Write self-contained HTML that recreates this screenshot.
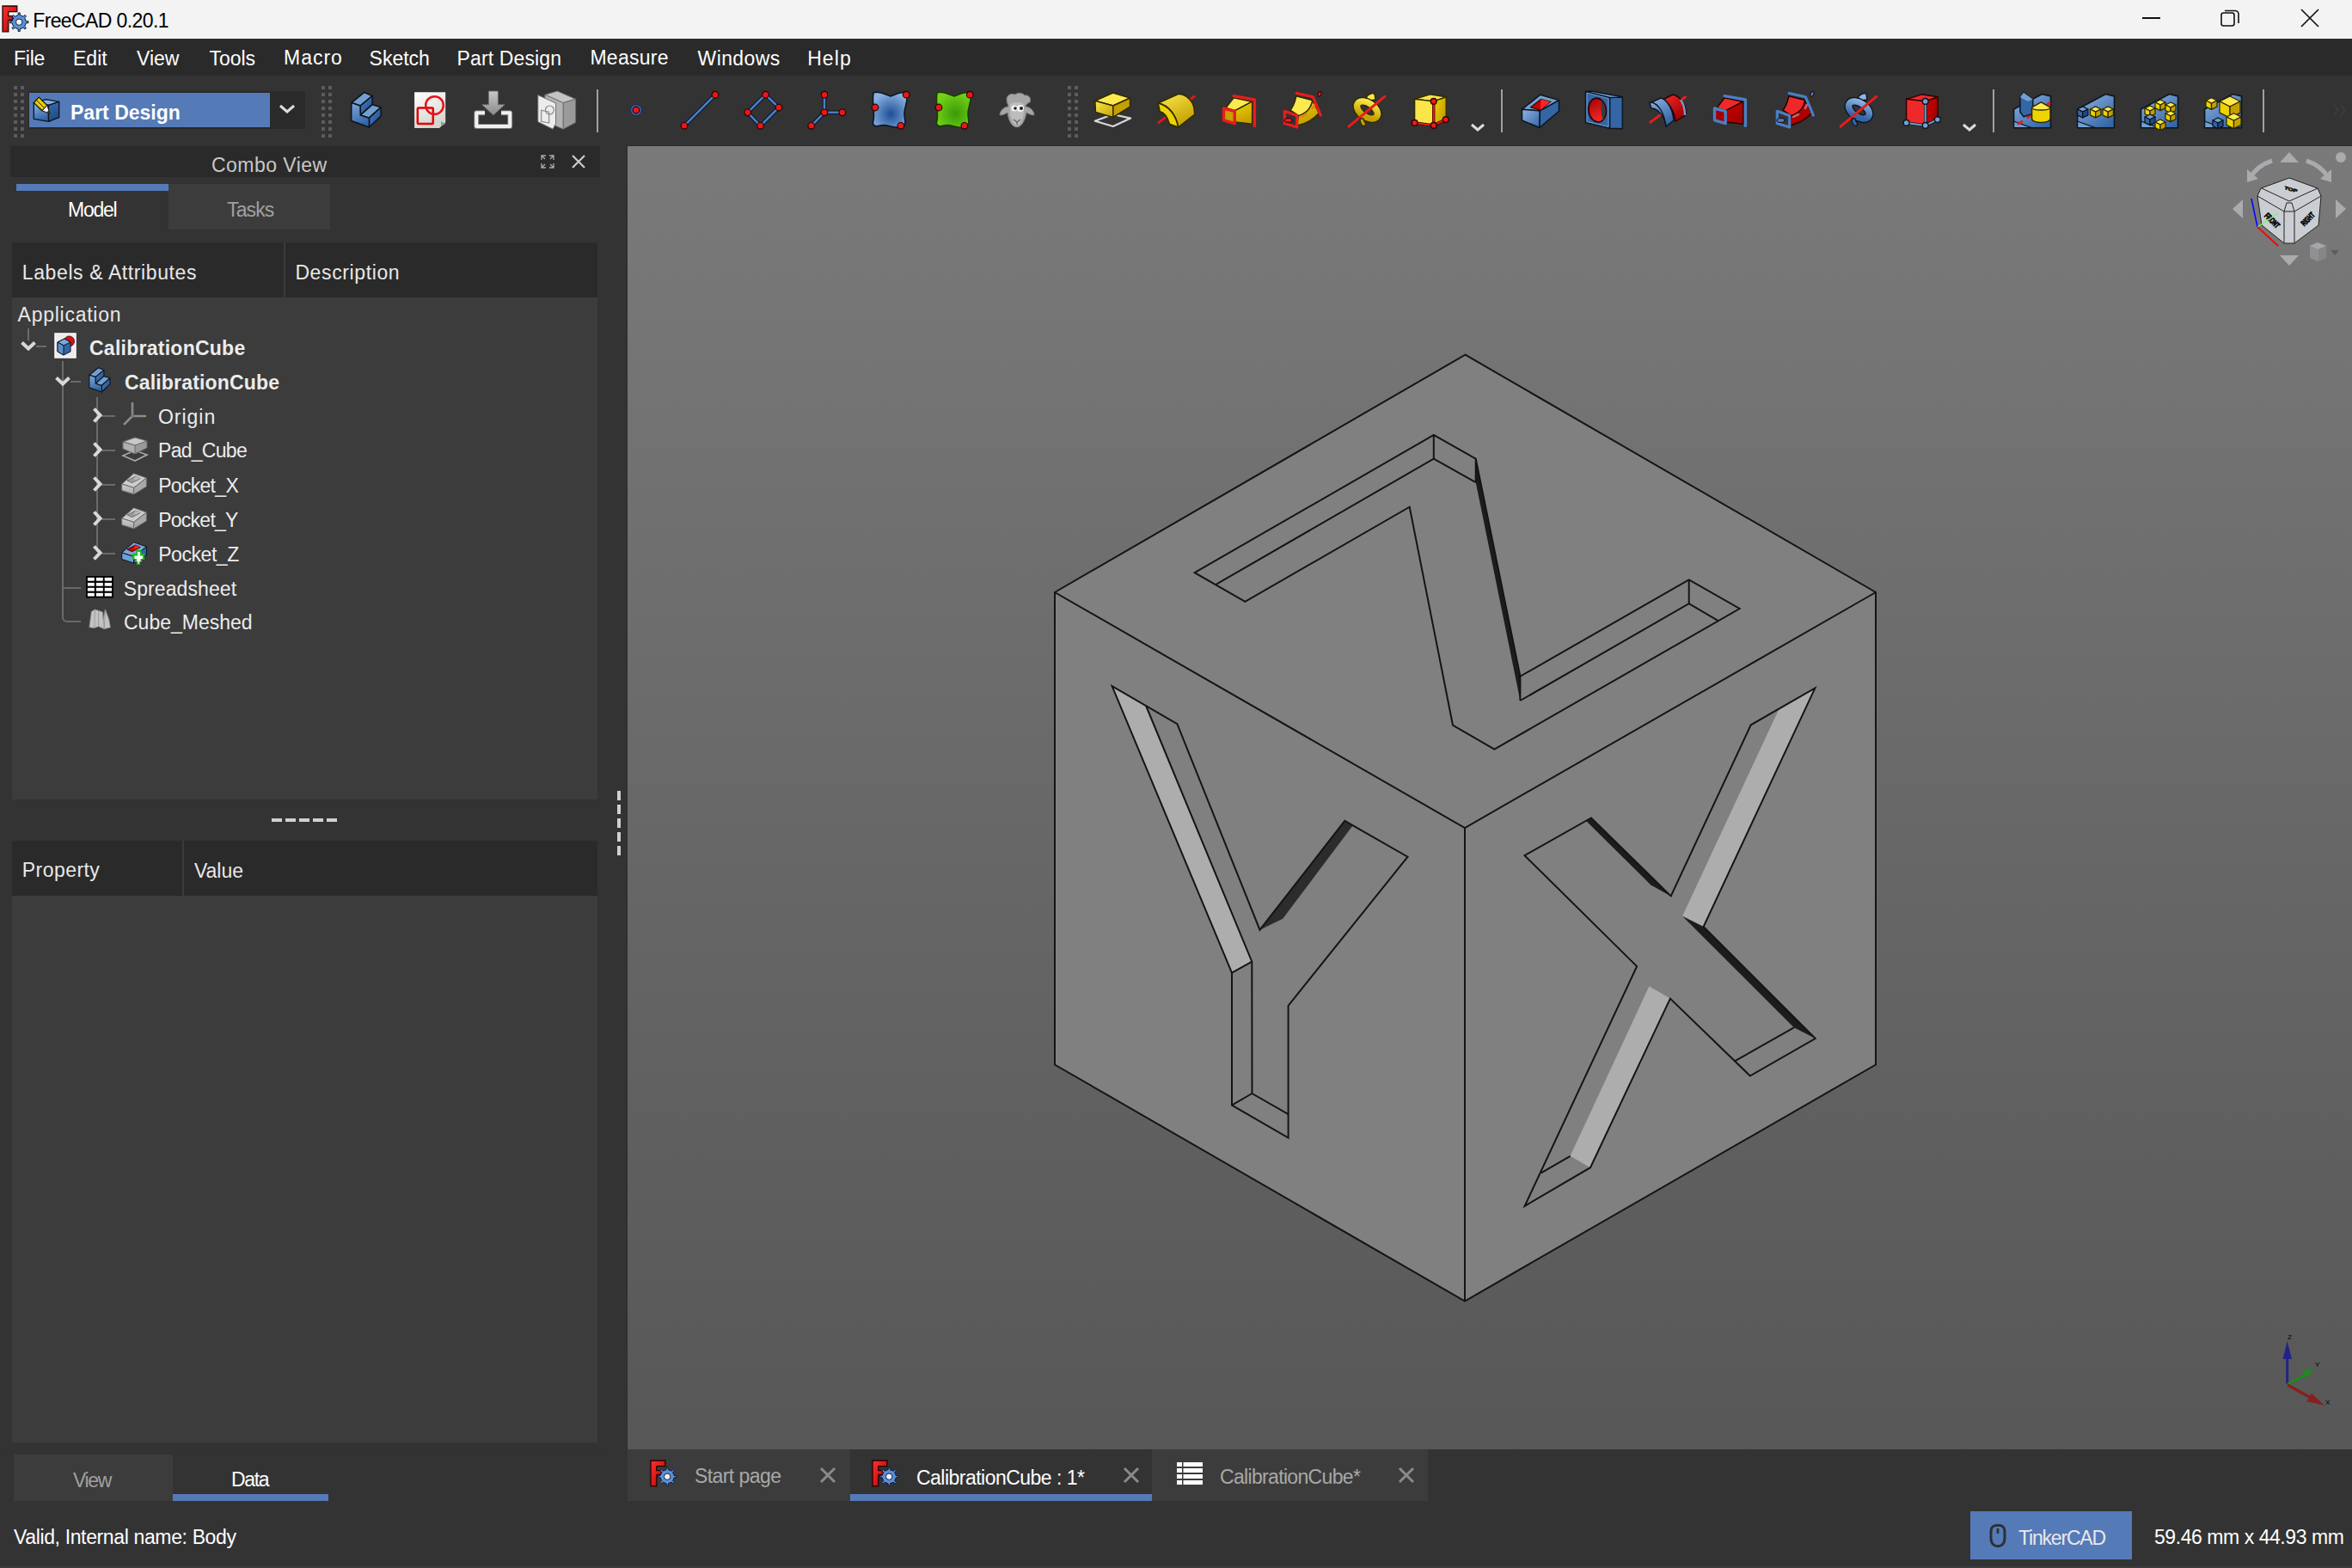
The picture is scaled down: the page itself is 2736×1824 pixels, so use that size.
<!DOCTYPE html>
<html><head><meta charset="utf-8">
<style>
*{margin:0;padding:0;box-sizing:border-box}
html,body{width:2736px;height:1824px;overflow:hidden;background:#333333;font-family:"Liberation Sans",sans-serif}
.a{position:absolute}
.t{position:absolute;white-space:nowrap;line-height:1}
svg.a{overflow:visible}
</style></head><body>
<div class="a" style="left:0px;top:0px;width:2736px;height:45px;background:#f3f3f3;"></div>
<svg class="a" style="left:2px;top:6px" width="34" height="34" viewBox="0 0 34 34"><defs><linearGradient id="lgF" x1="0" y1="0" x2="1" y2="1"><stop offset="0" stop-color="#ff3030"/><stop offset="1" stop-color="#b00000"/></linearGradient></defs>
<path d="M1 1 H17.8 V7.6 H7.8 V12.7 H13 V17.4 H7.8 V30.8 H1 Z" fill="url(#lgF)" stroke="#2a0000" stroke-width="1.3"/>
<path d="M28.33 18.61 L30.95 18.68 L30.95 20.72 L28.33 20.79 L26.72 24.67 L28.52 26.58 L27.08 28.02 L25.17 26.22 L21.29 27.83 L21.22 30.45 L19.18 30.45 L19.11 27.83 L15.23 26.22 L13.32 28.02 L11.88 26.58 L13.68 24.67 L12.07 20.79 L9.45 20.72 L9.45 18.68 L12.07 18.61 L13.68 14.73 L11.88 12.82 L13.32 11.38 L15.23 13.18 L19.11 11.57 L19.18 8.95 L21.22 8.95 L21.29 11.57 L25.17 13.18 L27.08 11.38 L28.52 12.82 L26.72 14.73Z" fill="#5b8fd6" stroke="#0b1a3a" stroke-width="1"/><circle cx="20.2" cy="19.7" r="3.7" fill="#f4f4f4" stroke="#0b1a3a" stroke-width="1"/></svg>
<div class="t" style="left:38.20px;top:13.20px;font-size:23px;color:#000;letter-spacing:-0.608px;">FreeCAD 0.20.1</div>
<div class="a" style="left:2492px;top:20px;width:21px;height:2px;background:#111;"></div>
<svg class="a" style="left:2580px;top:8px" width="30" height="30" viewBox="0 0 30 30"><rect x="4" y="7" width="15" height="15" rx="2.5" fill="none" stroke="#111" stroke-width="1.6"/><path d="M8 4.5 H20 A4 4 0 0 1 24 8.5 V19" fill="none" stroke="#111" stroke-width="1.6"/></svg>
<svg class="a" style="left:2672px;top:6px" width="30" height="30" viewBox="0 0 30 30"><path d="M5 5 L25 25 M25 5 L5 25" stroke="#111" stroke-width="1.7"/></svg>
<div class="a" style="left:0px;top:45px;width:2736px;height:43px;background:#2a2a2a;"></div>
<div class="t" style="left:16.00px;top:57.00px;font-size:23px;color:#fff;letter-spacing:-0.267px;">File</div>
<div class="t" style="left:85.00px;top:57.00px;font-size:23px;color:#fff;letter-spacing:0.000px;">Edit</div>
<div class="t" style="left:159.00px;top:57.00px;font-size:23px;color:#fff;letter-spacing:0.000px;">View</div>
<div class="t" style="left:243.60px;top:57.00px;font-size:23px;color:#fff;letter-spacing:-0.100px;">Tools</div>
<div class="t" style="left:330.00px;top:56.00px;font-size:23px;color:#fff;letter-spacing:1.000px;">Macro</div>
<div class="t" style="left:429.60px;top:57.00px;font-size:23px;color:#fff;letter-spacing:0.000px;">Sketch</div>
<div class="t" style="left:531.60px;top:57.00px;font-size:23px;color:#fff;letter-spacing:0.130px;">Part Design</div>
<div class="t" style="left:686.40px;top:56.00px;font-size:23px;color:#fff;letter-spacing:0.267px;">Measure</div>
<div class="t" style="left:811.60px;top:57.00px;font-size:23px;color:#fff;letter-spacing:0.383px;">Windows</div>
<div class="t" style="left:939.20px;top:57.00px;font-size:23px;color:#fff;letter-spacing:1.067px;">Help</div>
<div class="a" style="left:0px;top:88px;width:2736px;height:82px;background:#333333;"></div>
<svg class="a" style="left:16px;top:100px" width="14" height="62"><rect x="0" y="0" width="4" height="4" fill="#5c5c5c"/><rect x="8" y="0" width="4" height="4" fill="#5c5c5c"/><rect x="0" y="8" width="4" height="4" fill="#5c5c5c"/><rect x="8" y="8" width="4" height="4" fill="#5c5c5c"/><rect x="0" y="16" width="4" height="4" fill="#5c5c5c"/><rect x="8" y="16" width="4" height="4" fill="#5c5c5c"/><rect x="0" y="24" width="4" height="4" fill="#5c5c5c"/><rect x="8" y="24" width="4" height="4" fill="#5c5c5c"/><rect x="0" y="32" width="4" height="4" fill="#5c5c5c"/><rect x="8" y="32" width="4" height="4" fill="#5c5c5c"/><rect x="0" y="40" width="4" height="4" fill="#5c5c5c"/><rect x="8" y="40" width="4" height="4" fill="#5c5c5c"/><rect x="0" y="48" width="4" height="4" fill="#5c5c5c"/><rect x="8" y="48" width="4" height="4" fill="#5c5c5c"/><rect x="0" y="56" width="4" height="4" fill="#5c5c5c"/><rect x="8" y="56" width="4" height="4" fill="#5c5c5c"/></svg>
<svg class="a" style="left:374px;top:100px" width="14" height="62"><rect x="0" y="0" width="4" height="4" fill="#5c5c5c"/><rect x="8" y="0" width="4" height="4" fill="#5c5c5c"/><rect x="0" y="8" width="4" height="4" fill="#5c5c5c"/><rect x="8" y="8" width="4" height="4" fill="#5c5c5c"/><rect x="0" y="16" width="4" height="4" fill="#5c5c5c"/><rect x="8" y="16" width="4" height="4" fill="#5c5c5c"/><rect x="0" y="24" width="4" height="4" fill="#5c5c5c"/><rect x="8" y="24" width="4" height="4" fill="#5c5c5c"/><rect x="0" y="32" width="4" height="4" fill="#5c5c5c"/><rect x="8" y="32" width="4" height="4" fill="#5c5c5c"/><rect x="0" y="40" width="4" height="4" fill="#5c5c5c"/><rect x="8" y="40" width="4" height="4" fill="#5c5c5c"/><rect x="0" y="48" width="4" height="4" fill="#5c5c5c"/><rect x="8" y="48" width="4" height="4" fill="#5c5c5c"/><rect x="0" y="56" width="4" height="4" fill="#5c5c5c"/><rect x="8" y="56" width="4" height="4" fill="#5c5c5c"/></svg>
<svg class="a" style="left:1242px;top:100px" width="14" height="62"><rect x="0" y="0" width="4" height="4" fill="#5c5c5c"/><rect x="8" y="0" width="4" height="4" fill="#5c5c5c"/><rect x="0" y="8" width="4" height="4" fill="#5c5c5c"/><rect x="8" y="8" width="4" height="4" fill="#5c5c5c"/><rect x="0" y="16" width="4" height="4" fill="#5c5c5c"/><rect x="8" y="16" width="4" height="4" fill="#5c5c5c"/><rect x="0" y="24" width="4" height="4" fill="#5c5c5c"/><rect x="8" y="24" width="4" height="4" fill="#5c5c5c"/><rect x="0" y="32" width="4" height="4" fill="#5c5c5c"/><rect x="8" y="32" width="4" height="4" fill="#5c5c5c"/><rect x="0" y="40" width="4" height="4" fill="#5c5c5c"/><rect x="8" y="40" width="4" height="4" fill="#5c5c5c"/><rect x="0" y="48" width="4" height="4" fill="#5c5c5c"/><rect x="8" y="48" width="4" height="4" fill="#5c5c5c"/><rect x="0" y="56" width="4" height="4" fill="#5c5c5c"/><rect x="8" y="56" width="4" height="4" fill="#5c5c5c"/></svg>
<div class="a" style="left:33px;top:106px;width:322px;height:44px;background:#2a2a2a;"></div>
<div class="a" style="left:34px;top:108px;width:280px;height:40px;background:#557ab8;"></div>
<svg class="a" style="left:34px;top:106px" width="40" height="44" viewBox="0 0 40 44"><defs><linearGradient id="wbl" x1="0" y1="0" x2="0.3" y2="1"><stop offset="0" stop-color="#8ab4e6"/><stop offset="1" stop-color="#3465a4"/></linearGradient>
<linearGradient id="wbr" x1="0" y1="0" x2="0.3" y2="1"><stop offset="0" stop-color="#3a6db0"/><stop offset="1" stop-color="#204a87"/></linearGradient></defs>
<g stroke="#0b1521" stroke-width="1.3" stroke-linejoin="round">
<path d="M5.3 14 L19.4 9.7 L34.7 12.4 L22.5 16.3Z" fill="#86b1e3"/><path d="M5.3 14 L22.5 16.3 L22.5 35.4 L5.3 32.3Z" fill="url(#wbl)"/><path d="M22.5 16.3 L34.7 12.4 L34.7 30.6 L22.5 35.4Z" fill="url(#wbr)"/></g>
<path d="M5.3 13.5 L11.2 7 L20.8 16.5 L15 22.8Z" fill="#e8cf10" stroke="#1a1600" stroke-width="1.2"/><path d="M8.2 10.3 L17.8 19.8" stroke="#1a1600" stroke-width="0.9"/>
<path d="M15 22.8 L20.8 16.5 L24.2 26.4Z" fill="#f4f4f4" stroke="#1a1600" stroke-width="1"/><path d="M20.5 24.5 L22.8 22 L24.2 26.4Z" fill="#3a3300"/></svg>
<div class="t" style="left:82.00px;top:119.80px;font-size:23px;color:#fff;letter-spacing:0.000px;font-weight:bold">Part Design</div>
<svg class="a" style="left:324px;top:120px" width="20" height="14" viewBox="0 0 20 14"><path d="M2 3 L10 10 L18 3" fill="none" stroke="#ddd" stroke-width="3"/></svg>
<svg class="a" style="left:402px;top:104px" width="48" height="48" viewBox="0 0 48 48"><defs><linearGradient id="bdg" x1="0" y1="0" x2="0.3" y2="1"><stop offset="0" stop-color="#7fa9dd"/><stop offset="1" stop-color="#3465a4"/></linearGradient>
<linearGradient id="bdk" x1="0" y1="0" x2="1" y2="1"><stop offset="0" stop-color="#4a7fc5"/><stop offset="1" stop-color="#204a87"/></linearGradient></defs>
<g stroke="#0b1521" stroke-width="1.6" stroke-linejoin="round">
<path d="M21.8 3.4 L31.1 7.5 L17.1 19.1 L6.8 15.6Z" fill="#729fcf"/>
<path d="M31.1 7.5 L31.1 17.7 L17.3 29.9 L17.1 19.1Z" fill="url(#bdk)"/>
<path d="M31.1 17.7 L41 20.8 L27.4 33.2 L17.3 29.9Z" fill="#729fcf"/>
<path d="M41 20.8 L41.4 30.8 L27.4 44 L27.4 33.2Z" fill="url(#bdk)"/>
<path d="M6.8 15.6 L17.1 19.1 L17.3 29.9 L27.4 33.2 L27.4 44 L6.6 36.6Z" fill="url(#bdg)"/>
</g></svg>
<svg class="a" style="left:476px;top:104px" width="48" height="48" viewBox="0 0 48 48"><defs><linearGradient id="skg" x1="0" y1="0" x2="0.4" y2="1"><stop offset="0" stop-color="#ffffff"/><stop offset="1" stop-color="#d3d7cf"/></linearGradient></defs>
<path d="M6.1 3.2 H42.2 V38.5 L35 44.9 H6.1 Z" fill="url(#skg)"/><path d="M37 37 L42.2 40 L37 43Z" fill="#999"/>
<rect x="9.8" y="21.4" width="18" height="18.5" rx="1" fill="none" stroke="#e00000" stroke-width="2.5"/>
<circle cx="29.5" cy="18.5" r="10.3" fill="none" stroke="#e8101a" stroke-width="2.5"/></svg>
<svg class="a" style="left:550px;top:104px" width="48" height="48" viewBox="0 0 48 48"><defs><linearGradient id="img" x1="0" y1="0" x2="0" y2="1"><stop offset="0" stop-color="#c8c8c8"/><stop offset="1" stop-color="#8a8a8a"/></linearGradient></defs>
<path d="M18.4 2 H29.4 V17.7 H37.1 L23.9 30 L10.7 17.7 H18.4 Z" fill="url(#img)" stroke="#6a6a6a" stroke-width="0.8"/>
<path d="M14 27.3 H4.2 V43 H43.2 V27.3 H33" fill="none" stroke="#777" stroke-width="6" stroke-linejoin="round"/>
<path d="M14 27.3 H4.2 V43 H43.2 V27.3 H33" fill="none" stroke="#f0f0f0" stroke-width="4" stroke-linejoin="round"/></svg>
<svg class="a" style="left:624px;top:104px" width="48" height="48" viewBox="0 0 48 48"><g stroke="#6e6e6e" stroke-width="1" stroke-linejoin="round">
<path d="M9.9 6.2 L24.3 2 L45.6 11.3 L31.1 15.6Z" fill="#c4c4c4"/><path d="M31.1 15.6 L45.6 11.3 L45.6 38.5 L31.1 46.2Z" fill="#9a9a9a"/><path d="M9.9 6.2 L31.1 15.6 L31.1 46.2 L9.9 37Z" fill="#b4b4b4"/>
<path d="M1.8 6.6 L22.6 16 L22.6 39.4 L19.2 46.2 L1.8 37.7Z" fill="#ececec"/></g>
<rect x="5.6" y="23" width="9" height="13" transform="skewY(12)" fill="none" stroke="#8a8a8a" stroke-width="1.2"/><circle cx="15.4" cy="24" r="5" fill="none" stroke="#8a8a8a" stroke-width="1.2"/></svg>
<svg class="a" style="left:716px;top:104px" width="48" height="48" viewBox="0 0 48 48"><circle cx="24" cy="24" r="6.5" fill="#3565b0" stroke="#1a2a4a" stroke-width="1"/><circle cx="24" cy="24" r="3.8" fill="#e81818" stroke="#2a0000" stroke-width="1.2"/></svg>
<svg class="a" style="left:790px;top:104px" width="48" height="48" viewBox="0 0 48 48"><path d="M6 42.3 L42 6.2" fill="none" stroke="#0b1521" stroke-width="4.6" stroke-linejoin="round"/><path d="M6 42.3 L42 6.2" fill="none" stroke="#4a7fc5" stroke-width="2.6" stroke-linejoin="round"/><circle cx="6" cy="42.3" r="3.8" fill="#e81818" stroke="#2a0000" stroke-width="1.2"/><circle cx="42" cy="6.2" r="3.8" fill="#e81818" stroke="#2a0000" stroke-width="1.2"/></svg>
<svg class="a" style="left:864px;top:104px" width="48" height="48" viewBox="0 0 48 48"><path d="M5.7 26.8 L26.5 6.2 L41.9 21 L20.6 42.3Z" fill="none" stroke="#0b1521" stroke-width="4.6" stroke-linejoin="round"/><path d="M5.7 26.8 L26.5 6.2 L41.9 21 L20.6 42.3Z" fill="none" stroke="#4a7fc5" stroke-width="2.6" stroke-linejoin="round"/><circle cx="5.7" cy="26.8" r="3.8" fill="#e81818" stroke="#2a0000" stroke-width="1.2"/><circle cx="26.5" cy="6.2" r="3.8" fill="#e81818" stroke="#2a0000" stroke-width="1.2"/><circle cx="41.9" cy="21" r="3.8" fill="#e81818" stroke="#2a0000" stroke-width="1.2"/><circle cx="20.6" cy="42.3" r="3.8" fill="#e81818" stroke="#2a0000" stroke-width="1.2"/></svg>
<svg class="a" style="left:938px;top:104px" width="48" height="48" viewBox="0 0 48 48"><path d="M21 6.2 V26.8 H41.8 M21 26.8 L5.7 42.3" fill="none" stroke="#0b1521" stroke-width="4.6" stroke-linejoin="round"/><path d="M21 6.2 V26.8 H41.8 M21 26.8 L5.7 42.3" fill="none" stroke="#4a7fc5" stroke-width="2.6" stroke-linejoin="round"/><circle cx="21" cy="6.2" r="3.8" fill="#e81818" stroke="#2a0000" stroke-width="1.2"/><circle cx="21" cy="26.8" r="3.8" fill="#e81818" stroke="#2a0000" stroke-width="1.2"/><circle cx="41.8" cy="26.8" r="3.8" fill="#e81818" stroke="#2a0000" stroke-width="1.2"/><circle cx="5.7" cy="42.3" r="3.8" fill="#e81818" stroke="#2a0000" stroke-width="1.2"/></svg>
<svg class="a" style="left:1012px;top:104px" width="48" height="48" viewBox="0 0 48 48"><defs><radialGradient id="gb" cx="0.52" cy="0.62" r="0.6"><stop offset="0" stop-color="#1f4e95"/><stop offset="1" stop-color="#86b0e0"/></radialGradient></defs><path d="M4 4 C10 1,18 6,24 8 C30 6,36 2,42 4 C46 10,40 20,40 28 C40 36,44 40,36 44 C28 46,20 40,12 42 C6 44,2 42,4 36 C6 28,2 14,4 4Z" fill="url(#gb)" stroke="#0b1521" stroke-width="1.6"/><circle cx="42.2" cy="6.2" r="3.8" fill="#e81818" stroke="#2a0000" stroke-width="1.2"/><circle cx="6" cy="21" r="3.8" fill="#e81818" stroke="#2a0000" stroke-width="1.2"/><circle cx="35.9" cy="42.3" r="3.8" fill="#e81818" stroke="#2a0000" stroke-width="1.2"/></svg>
<svg class="a" style="left:1086px;top:104px" width="48" height="48" viewBox="0 0 48 48"><defs><radialGradient id="gg" cx="0.55" cy="0.6" r="0.6"><stop offset="0" stop-color="#3a9a08"/><stop offset="1" stop-color="#73d216"/></radialGradient></defs><path d="M4 4 C10 1,18 6,24 8 C30 6,36 2,42 4 C46 10,40 20,40 28 C40 36,44 40,36 44 C28 46,20 40,12 42 C6 44,2 42,4 36 C6 28,2 14,4 4Z" fill="url(#gg)" stroke="#1a3a00" stroke-width="1.6"/><circle cx="42.2" cy="6.2" r="3.8" fill="#e81818" stroke="#2a0000" stroke-width="1.2"/><circle cx="6" cy="21" r="3.8" fill="#e81818" stroke="#2a0000" stroke-width="1.2"/><circle cx="35.9" cy="42.3" r="3.8" fill="#e81818" stroke="#2a0000" stroke-width="1.2"/></svg>
<svg class="a" style="left:1159px;top:104px" width="48" height="48" viewBox="0 0 48 48"><path d="M12 12 C12 6,18 4,22 6 C25 3,31 4,33 7 C38 6,41 11,39 15 C36 16,34 18,34 20 C38 20,44 24,44 30 C40 30,37 28,35 27 C34 34,30 44,24 44 C18 44,14 36,13 27 C11 28,8 30,4 30 C4 24,10 20,14 20 C14 18,12 16,12 12Z" fill="#a6a6a6" stroke="#7a7a7a" stroke-width="1"/>
<path d="M16 18 C16 14,32 14,32 18 C33 28,30 40,24 42 C18 40,15 28,16 18Z" fill="#bdbdbd"/><circle cx="21" cy="22" r="3.6" fill="#f2f2f2"/><circle cx="28" cy="22" r="4" fill="#f2f2f2"/><circle cx="22" cy="22" r="1.8" fill="#222"/><circle cx="29" cy="22" r="2" fill="#222"/><path d="M20 35 L24 38 L28 35 M24 38 V41" stroke="#666" stroke-width="1.4" fill="none"/></svg>
<svg class="a" style="left:1270px;top:104px" width="48" height="48" viewBox="0 0 48 48"><defs><linearGradient id="padg" x1="0" y1="0" x2="1" y2="1"><stop offset="0" stop-color="#fce94f"/><stop offset="1" stop-color="#c4a000"/></linearGradient></defs><path d="M3.8 36.8 L24.6 29 L45.2 33.6 L24.8 43Z" fill="none" stroke="#d8d8d8" stroke-width="2.2" stroke-linejoin="round"/>
<g stroke="#302b00" stroke-width="1.6" stroke-linejoin="round"><path d="M3.8 13.2 L24.6 3.9 L44.6 10 L24.8 19Z" fill="#fce94f"/><path d="M3.8 13.2 L24.8 19 L24.8 32.4 L4.4 26.6Z" fill="url(#padg)"/><path d="M24.8 19 L44.6 10 L44.6 20.2 L24.8 32.4Z" fill="#c4a000"/></g></svg>
<svg class="a" style="left:1344px;top:104px" width="48" height="48" viewBox="0 0 48 48"><defs><linearGradient id="revg" x1="0" y1="0" x2="0.6" y2="1"><stop offset="0" stop-color="#fce94f"/><stop offset="1" stop-color="#c4a000"/></linearGradient></defs><path d="M3.7 38.6 L45.1 8.4" stroke="#e01818" stroke-width="3" stroke-linecap="round"/>
<path d="M3.1 15.9 L26.4 5.4 C36 5,44 14,45.1 22 L45.7 29.2 L26.6 44.1 C24 30,16 19,3.1 15.9Z" fill="url(#revg)" stroke="#302b00" stroke-width="1.6" stroke-linejoin="round"/>
<path d="M3.1 15.9 C16 19,24 30,26.6 44.1 L16.4 40.2 C14 32,10 27,5.3 25.9Z" fill="#edd400" stroke="#302b00" stroke-width="1.6" stroke-linejoin="round"/></svg>
<svg class="a" style="left:1418px;top:104px" width="48" height="48" viewBox="0 0 48 48"><defs><linearGradient id="loftg" x1="0" y1="0" x2="0.3" y2="1"><stop offset="0" stop-color="#edd400"/><stop offset="1" stop-color="#c4a000"/></linearGradient></defs><g stroke="#302b00" stroke-width="1.4" stroke-linejoin="round">
<path d="M8.2 21.4 L17.1 9.8 L38.6 14.2 L18.7 24.7Z" fill="#fce94f"/><path d="M18.7 24.7 L38.6 14.2 L38.6 40.2 L18.7 38Z" fill="url(#loftg)"/></g>
<path d="M17.1 7.6 L41.4 12 L41.4 42.4" fill="none" stroke="#e81c1c" stroke-width="3.4" stroke-linecap="round" stroke-linejoin="round"/>
<path d="M5.5 22 L18.2 25.3 L18.2 39.7 L5.5 35.8Z" fill="#c4a000" stroke="#e81c1c" stroke-width="3.4" stroke-linejoin="round"/></svg>
<svg class="a" style="left:1491px;top:104px" width="48" height="48" viewBox="0 0 48 48"><defs><linearGradient id="pipeg" x1="0" y1="0" x2="0.3" y2="1"><stop offset="0" stop-color="#edd400"/><stop offset="1" stop-color="#c4a000"/></linearGradient></defs><g stroke="#302b00" stroke-width="1.4" stroke-linejoin="round">
<path d="M10 24 C14 20,16 12,16.9 7.9 L35.6 12.6 C34 22,28 28,19.4 30.4 L17.7 42 C30 40,40 32,43.2 27.5 L35.6 12.6 C34 22,28 28,19.4 30.4Z" fill="url(#pipeg)"/>
<path d="M10 24 C14 20,16 12,16.9 7.9 L35.6 12.6 C34 22,28 28,19.4 30.4Z" fill="#fce94f"/></g>
<path d="M22 32 L28 29 M36 22 L38 18" stroke="#e8801c" stroke-width="2.6" stroke-linecap="round"/>
<path d="M17.3 4.5 L36.4 8.8 L45.3 30" fill="none" stroke="#e81c1c" stroke-width="3.2" stroke-linecap="round" stroke-linejoin="round"/>
<path d="M3.3 25.3 L17.7 30.4 L17.7 44 L3.3 39.4Z" fill="none" stroke="#e81c1c" stroke-width="3.2" stroke-linejoin="round"/>
<ellipse cx="7.5" cy="36" rx="4.6" ry="2.4" fill="#e81c1c" stroke="#200" stroke-width="1"/><ellipse cx="44" cy="5.4" rx="1.8" ry="3" transform="rotate(25 44 5.4)" fill="#e81c1c" stroke="#200" stroke-width="1"/></svg>
<svg class="a" style="left:1566px;top:104px" width="48" height="48" viewBox="0 0 48 48"><defs><linearGradient id="helg" x1="0" y1="0" x2="0.5" y2="1"><stop offset="0" stop-color="#fce94f"/><stop offset="1" stop-color="#c4a000"/></linearGradient></defs>
<path d="M24 8 C28 4,32 4,33 6 L34 12 C30 12,26 14,24 16Z" fill="#fce94f" stroke="#302b00" stroke-width="1.3"/>
<ellipse cx="24.5" cy="24" rx="13.5" ry="8" transform="rotate(35 24.5 24)" fill="none" stroke="#302b00" stroke-width="10"/>
<ellipse cx="24.5" cy="24" rx="13.5" ry="8" transform="rotate(35 24.5 24)" fill="none" stroke="url(#helg)" stroke-width="7.4"/>
<path d="M3.1 43.2 L44.7 8.3" stroke="#e81c1c" stroke-width="3" stroke-linecap="round"/>
<path d="M16 34 C16 38,18 42,21 43 L23 40 C21 38,20 36,20 34Z" fill="#c4a000" stroke="#302b00" stroke-width="1.3"/></svg>
<svg class="a" style="left:1640px;top:104px" width="48" height="48" viewBox="0 0 48 48"><defs><linearGradient id="abg" x1="0" y1="0" x2="1" y2="0.6"><stop offset="0" stop-color="#edd400"/><stop offset="1" stop-color="#c4a000"/></linearGradient></defs><g stroke="#302b00" stroke-width="1.4" stroke-linejoin="round">
<path d="M5.6 11.3 L23.5 5.8 L42.2 8.8 L27.7 13.9Z" fill="#fbe64a"/><path d="M5.6 11.3 L27.7 13.9 L27.7 41.9 L5.6 38.9Z" fill="#fbe64a"/><path d="M27.7 13.9 L42.2 8.8 L42.2 34.7 L27.7 41.9Z" fill="url(#abg)"/></g>
<path d="M27.7 13.9 V41.9 L5.6 38.9 M27.7 41.9 L41.8 35.1" fill="none" stroke="#300" stroke-width="3.4"/><path d="M27.7 13.9 V41.9 L5.6 38.9 M27.7 41.9 L41.8 35.1" fill="none" stroke="#e81c1c" stroke-width="2"/><circle cx="27.7" cy="13.9" r="3.4" fill="#e81c1c" stroke="#300" stroke-width="1.4"/><circle cx="5.6" cy="38.9" r="3.4" fill="#e81c1c" stroke="#300" stroke-width="1.4"/><circle cx="27.7" cy="41.9" r="3.4" fill="#e81c1c" stroke="#300" stroke-width="1.4"/><circle cx="41.8" cy="35.1" r="3.4" fill="#e81c1c" stroke="#300" stroke-width="1.4"/></svg>
<svg class="a" style="left:1768px;top:104px" width="48" height="48" viewBox="0 0 48 48"><defs><linearGradient id="pkg" x1="0" y1="0" x2="1" y2="1"><stop offset="0" stop-color="#8fb4e3"/><stop offset="1" stop-color="#3465a4"/></linearGradient></defs><g stroke="#0b1521" stroke-width="1.5" stroke-linejoin="round">
<path d="M2.5 23.2 L23.8 6.2 L45.5 12.6 L23.4 24.9Z" fill="#729fcf"/><path d="M2.5 23.2 L23.4 24.9 L22.9 44.5 L2.5 36Z" fill="url(#pkg)"/><path d="M23.4 24.9 L45.5 12.6 L45.5 25.3 L22.9 44.5Z" fill="#3465a4"/></g>
<path d="M12.7 20.7 L24.6 11.3 L35.7 14.3 L23.8 24.1Z" fill="#cc0000" stroke="#280000" stroke-width="1.2"/><path d="M24.6 11.3 L35.7 14.3 L23.8 24.1Z" fill="#ef2929"/></svg>
<svg class="a" style="left:1842px;top:104px" width="48" height="48" viewBox="0 0 48 48"><defs><linearGradient id="hlg" x1="0" y1="0" x2="0.3" y2="1"><stop offset="0" stop-color="#a40000"/><stop offset="1" stop-color="#ef2929"/></linearGradient></defs><g stroke="#0b1521" stroke-width="1.5" stroke-linejoin="round">
<path d="M2.5 2.4 L30.6 9.6 L30.6 45.3 L2.5 38.5Z" fill="#3465a4"/><path d="M30.6 9.6 L45.4 8.8 L45.4 45.7 L30.6 45.3Z" fill="#3465a4"/><path d="M2.5 2.4 L8.9 2 L45.4 8.8 L30.6 9.6Z" fill="#729fcf"/></g>
<path d="M4 4 L29 10.5 L29 43.5 L4 37.5Z" fill="none" stroke="#729fcf" stroke-width="1"/>
<ellipse cx="16.1" cy="24.1" rx="10.2" ry="14" transform="rotate(-8 16.1 24.1)" fill="url(#hlg)" stroke="#280000" stroke-width="1.6"/><path d="M21 13 C26 18,26 30,23 36 C20 30,20 18,21 13Z" fill="#3a3a3a"/></svg>
<svg class="a" style="left:1916px;top:104px" width="48" height="48" viewBox="0 0 48 48"><defs><linearGradient id="grg" x1="0" y1="0" x2="0.6" y2="1"><stop offset="0" stop-color="#8fb4e3"/><stop offset="1" stop-color="#3465a4"/></linearGradient><linearGradient id="grr" x1="0" y1="0" x2="0.6" y2="1"><stop offset="0" stop-color="#ef2929"/><stop offset="1" stop-color="#a40000"/></linearGradient></defs><path d="M3.8 38.1 L44.6 8.8" stroke="#e81c1c" stroke-width="3" stroke-linecap="round"/>
<path d="M18 12 L30 6 C38 8,44 16,45 24 L44.5 30 L33 37 C32 26,26 16,18 12Z" fill="url(#grr)" stroke="#280000" stroke-width="1.4"/>
<path d="M39 12 C42 16,44 22,44 30" fill="none" stroke="#729fcf" stroke-width="2.4"/>
<path d="M2.9 16 L16 10 C24 12,30 24,31 36 L22 43 C20 30,12 22,5 22Z" fill="url(#grg)" stroke="#0b1521" stroke-width="1.5"/>
<path d="M5 15 C14 17,20 28,22 43" fill="none" stroke="#0b1521" stroke-width="1.3"/></svg>
<svg class="a" style="left:1989px;top:104px" width="48" height="48" viewBox="0 0 48 48"><defs><linearGradient id="sloftg" x1="0" y1="0" x2="0.3" y2="1"><stop offset="0" stop-color="#cc0000"/><stop offset="1" stop-color="#a40000"/></linearGradient></defs><g stroke="#280000" stroke-width="1.4" stroke-linejoin="round">
<path d="M8.2 21.4 L17.1 9.8 L38.6 14.2 L18.7 24.7Z" fill="#ef2929"/><path d="M18.7 24.7 L38.6 14.2 L38.6 40.2 L18.7 38Z" fill="url(#sloftg)"/></g>
<path d="M17.1 7.6 L41.4 12 L41.4 42.4" fill="none" stroke="#4a7fc5" stroke-width="3.4" stroke-linecap="round" stroke-linejoin="round"/>
<path d="M5.5 22 L18.2 25.3 L18.2 39.7 L5.5 35.8Z" fill="#a40000" stroke="#4a7fc5" stroke-width="3.4" stroke-linejoin="round"/></svg>
<svg class="a" style="left:2064px;top:104px" width="48" height="48" viewBox="0 0 48 48"><defs><linearGradient id="spipeg" x1="0" y1="0" x2="0.3" y2="1"><stop offset="0" stop-color="#cc0000"/><stop offset="1" stop-color="#a40000"/></linearGradient></defs><g stroke="#280000" stroke-width="1.4" stroke-linejoin="round">
<path d="M10 24 C14 20,16 12,16.9 7.9 L35.6 12.6 C34 22,28 28,19.4 30.4 L17.7 42 C30 40,40 32,43.2 27.5 L35.6 12.6 C34 22,28 28,19.4 30.4Z" fill="url(#spipeg)"/>
<path d="M10 24 C14 20,16 12,16.9 7.9 L35.6 12.6 C34 22,28 28,19.4 30.4Z" fill="#ef2929"/></g>
<path d="M22 32 L28 29 M36 22 L38 18" stroke="#c06070" stroke-width="2.6" stroke-linecap="round"/>
<path d="M17.3 4.5 L36.4 8.8 L45.3 30" fill="none" stroke="#4a7fc5" stroke-width="3.2" stroke-linecap="round" stroke-linejoin="round"/>
<path d="M3.3 25.3 L17.7 30.4 L17.7 44 L3.3 39.4Z" fill="none" stroke="#4a7fc5" stroke-width="3.2" stroke-linejoin="round"/>
<ellipse cx="7.5" cy="36" rx="4.6" ry="2.4" fill="#4a7fc5" stroke="#200" stroke-width="1"/><ellipse cx="44" cy="5.4" rx="1.8" ry="3" transform="rotate(25 44 5.4)" fill="#4a7fc5" stroke="#200" stroke-width="1"/></svg>
<svg class="a" style="left:2138px;top:104px" width="48" height="48" viewBox="0 0 48 48"><defs><linearGradient id="shelg" x1="0" y1="0" x2="0.5" y2="1"><stop offset="0" stop-color="#8fb4e3"/><stop offset="1" stop-color="#3465a4"/></linearGradient></defs>
<path d="M24 8 C28 4,32 4,33 6 L34 12 C30 12,26 14,24 16Z" fill="#8fb4e3" stroke="#0b1521" stroke-width="1.3"/>
<ellipse cx="24.5" cy="24" rx="13.5" ry="8" transform="rotate(35 24.5 24)" fill="none" stroke="#0b1521" stroke-width="10"/>
<ellipse cx="24.5" cy="24" rx="13.5" ry="8" transform="rotate(35 24.5 24)" fill="none" stroke="url(#shelg)" stroke-width="7.4"/>
<path d="M3.1 43.2 L44.7 8.3" stroke="#e81c1c" stroke-width="3" stroke-linecap="round"/>
<path d="M16 34 C16 38,18 42,21 43 L23 40 C21 38,20 36,20 34Z" fill="#3465a4" stroke="#0b1521" stroke-width="1.3"/></svg>
<svg class="a" style="left:2212px;top:104px" width="48" height="48" viewBox="0 0 48 48"><defs><linearGradient id="sbg" x1="0" y1="0" x2="1" y2="0.6"><stop offset="0" stop-color="#cc0000"/><stop offset="1" stop-color="#a40000"/></linearGradient></defs><g stroke="#280000" stroke-width="1.4" stroke-linejoin="round">
<path d="M5.6 11.3 L23.5 5.8 L42.2 8.8 L27.7 13.9Z" fill="#ef2929"/><path d="M5.6 11.3 L27.7 13.9 L27.7 41.9 L5.6 38.9Z" fill="#ef2929"/><path d="M27.7 13.9 L42.2 8.8 L42.2 34.7 L27.7 41.9Z" fill="url(#sbg)"/></g>
<path d="M27.7 13.9 V41.9 L5.6 38.9 M27.7 41.9 L41.8 35.1" fill="none" stroke="#0b1521" stroke-width="3.4"/><path d="M27.7 13.9 V41.9 L5.6 38.9 M27.7 41.9 L41.8 35.1" fill="none" stroke="#729fcf" stroke-width="2"/><circle cx="27.7" cy="13.9" r="3.4" fill="#729fcf" stroke="#0b1521" stroke-width="1.4"/><circle cx="5.6" cy="38.9" r="3.4" fill="#729fcf" stroke="#0b1521" stroke-width="1.4"/><circle cx="27.7" cy="41.9" r="3.4" fill="#729fcf" stroke="#0b1521" stroke-width="1.4"/><circle cx="41.8" cy="35.1" r="3.4" fill="#729fcf" stroke="#0b1521" stroke-width="1.4"/></svg>
<svg class="a" style="left:2340px;top:104px" width="48" height="48" viewBox="0 0 48 48"><defs><linearGradient id="mrg" x1="0" y1="0" x2="0.8" y2="1"><stop offset="0" stop-color="#8fb4e3"/><stop offset="1" stop-color="#3465a4"/></linearGradient></defs><path d="M2.6 44.8 L2.6 23 L35.4 5.5 L45.5 7.9 L45.5 44.8Z" fill="url(#mrg)" stroke="#0b1521" stroke-width="1.6" stroke-linejoin="round"/>
<path d="M2.6 37 L24 44.8" stroke="#0b1521" stroke-width="1.2"/><path d="M3.5 38.5 L3.5 44 L18 44Z" fill="#729fcf"/><path d="M8 40 L12 37.5 M19 32.5 L23 30 M39 19 L44 16" stroke="#e81c1c" stroke-width="3" stroke-linecap="round"/>
<path d="M9.9 9.1 L14 3.7 L24.8 11.5 L24.8 28.1 L14 31.7 L9.9 26.4Z" fill="#3465a4" stroke="#0b1521" stroke-width="1.5" stroke-linejoin="round"/><path d="M9.9 9.1 L14 3.7 L24.8 11.5 L19 14Z" fill="#729fcf"/>
<path d="M23.6 21 L34.3 15 L45 21 L45 34 C45 40,23.6 40,23.6 34Z" fill="#edd400" stroke="#302b00" stroke-width="1.5"/><path d="M23.6 21 L34.3 15 L45 21 C45 25,23.6 25,23.6 21Z" fill="#fce94f" stroke="#302b00" stroke-width="1.3"/></svg>
<svg class="a" style="left:2414px;top:104px" width="48" height="48" viewBox="0 0 48 48"><defs><linearGradient id="lrg" x1="0" y1="0" x2="0.8" y2="1"><stop offset="0" stop-color="#8fb4e3"/><stop offset="1" stop-color="#3465a4"/></linearGradient></defs><path d="M2.6 44.8 L2.6 23 L35.4 5.5 L45.5 7.9 L45.5 44.8Z" fill="url(#lrg)" stroke="#0b1521" stroke-width="1.6" stroke-linejoin="round"/>
<path d="M2.6 37 L24 44.8" stroke="#0b1521" stroke-width="1.2"/><path d="M3.5 38.5 L3.5 44 L18 44Z" fill="#729fcf"/><g stroke="#0b1521" stroke-width="1.3" stroke-linejoin="round"><path d="M2.5 23 L8.7 19.9 L14.9 23 L8.7 26.1Z" fill="#729fcf"/><path d="M2.5 23 L8.7 26.1 L8.7 32.92 L2.5 29.82Z" fill="#3465a4"/><path d="M8.7 26.1 L14.9 23 L14.9 29.82 L8.7 32.92Z" fill="#204a87"/></g><g stroke="#302b00" stroke-width="1.3" stroke-linejoin="round"><path d="M17.5 23 L23.7 19.9 L29.9 23 L23.7 26.1Z" fill="#fce94f"/><path d="M17.5 23 L23.7 26.1 L23.7 32.92 L17.5 29.82Z" fill="#edd400"/><path d="M23.7 26.1 L29.9 23 L29.9 29.82 L23.7 32.92Z" fill="#c4a000"/></g><g stroke="#302b00" stroke-width="1.3" stroke-linejoin="round"><path d="M32 23 L38.2 19.9 L44.4 23 L38.2 26.1Z" fill="#fce94f"/><path d="M32 23 L38.2 26.1 L38.2 32.92 L32 29.82Z" fill="#edd400"/><path d="M38.2 26.1 L44.4 23 L44.4 29.82 L38.2 32.92Z" fill="#c4a000"/></g></svg>
<svg class="a" style="left:2488px;top:104px" width="48" height="48" viewBox="0 0 48 48"><defs><linearGradient id="prg" x1="0" y1="0" x2="0.8" y2="1"><stop offset="0" stop-color="#8fb4e3"/><stop offset="1" stop-color="#3465a4"/></linearGradient></defs><path d="M2.6 44.8 L2.6 23 L35.4 5.5 L45.5 7.9 L45.5 44.8Z" fill="url(#prg)" stroke="#0b1521" stroke-width="1.6" stroke-linejoin="round"/>
<path d="M2.6 37 L24 44.8" stroke="#0b1521" stroke-width="1.2"/><path d="M3.5 38.5 L3.5 44 L18 44Z" fill="#729fcf"/><g stroke="#302b00" stroke-width="1.3" stroke-linejoin="round"><path d="M19 15 L25 12.0 L31 15 L25 18.0Z" fill="#fce94f"/><path d="M19 15 L25 18.0 L25 24.6 L19 21.6Z" fill="#edd400"/><path d="M25 18.0 L31 15 L31 21.6 L25 24.6Z" fill="#c4a000"/></g><g stroke="#302b00" stroke-width="1.3" stroke-linejoin="round"><path d="M31 18 L37 15.0 L43 18 L37 21.0Z" fill="#fce94f"/><path d="M31 18 L37 21.0 L37 27.6 L31 24.6Z" fill="#edd400"/><path d="M37 21.0 L43 18 L43 24.6 L37 27.6Z" fill="#c4a000"/></g><g stroke="#302b00" stroke-width="1.3" stroke-linejoin="round"><path d="M7 22 L13 19.0 L19 22 L13 25.0Z" fill="#fce94f"/><path d="M7 22 L13 25.0 L13 31.6 L7 28.6Z" fill="#edd400"/><path d="M13 25.0 L19 22 L19 28.6 L13 31.6Z" fill="#c4a000"/></g><g stroke="#0b1521" stroke-width="1.3" stroke-linejoin="round"><path d="M7 32 L13 29.0 L19 32 L13 35.0Z" fill="#729fcf"/><path d="M7 32 L13 35.0 L13 41.6 L7 38.6Z" fill="#3465a4"/><path d="M13 35.0 L19 32 L19 38.6 L13 41.6Z" fill="#204a87"/></g><g stroke="#302b00" stroke-width="1.3" stroke-linejoin="round"><path d="M19 38 L25 35.0 L31 38 L25 41.0Z" fill="#fce94f"/><path d="M19 38 L25 41.0 L25 47.6 L19 44.6Z" fill="#edd400"/><path d="M25 41.0 L31 38 L31 44.6 L25 47.6Z" fill="#c4a000"/></g><g stroke="#302b00" stroke-width="1.3" stroke-linejoin="round"><path d="M31 28 L37 25.0 L43 28 L37 31.0Z" fill="#fce94f"/><path d="M31 28 L37 31.0 L37 37.6 L31 34.6Z" fill="#edd400"/><path d="M37 31.0 L43 28 L43 34.6 L37 37.6Z" fill="#c4a000"/></g></svg>
<svg class="a" style="left:2562px;top:104px" width="48" height="48" viewBox="0 0 48 48"><defs><linearGradient id="murg" x1="0" y1="0" x2="0.8" y2="1"><stop offset="0" stop-color="#8fb4e3"/><stop offset="1" stop-color="#3465a4"/></linearGradient></defs><path d="M2.6 44.8 L2.6 23 L35.4 5.5 L45.5 7.9 L45.5 44.8Z" fill="url(#murg)" stroke="#0b1521" stroke-width="1.6" stroke-linejoin="round"/>
<path d="M2.6 37 L24 44.8" stroke="#0b1521" stroke-width="1.2"/><path d="M3.5 38.5 L3.5 44 L18 44Z" fill="#729fcf"/><g stroke="#302b00" stroke-width="1.3" stroke-linejoin="round"><path d="M20 14 L32 8.0 L44 14 L32 20.0Z" fill="#fce94f"/><path d="M20 14 L32 20.0 L32 33.2 L20 27.200000000000003Z" fill="#edd400"/><path d="M32 20.0 L44 14 L44 27.200000000000003 L32 33.2Z" fill="#c4a000"/></g><g stroke="#302b00" stroke-width="1.3" stroke-linejoin="round"><path d="M4 13 L10.5 9.75 L17.0 13 L10.5 16.25Z" fill="#fce94f"/><path d="M4 13 L10.5 16.25 L10.5 23.4 L4 20.15Z" fill="#edd400"/><path d="M10.5 16.25 L17.0 13 L17.0 20.15 L10.5 23.4Z" fill="#c4a000"/></g><g stroke="#0b1521" stroke-width="1.3" stroke-linejoin="round"><path d="M12 36 L18 33.0 L24 36 L18 39.0Z" fill="#729fcf"/><path d="M12 36 L18 39.0 L18 45.6 L12 42.6Z" fill="#3465a4"/><path d="M18 39.0 L24 36 L24 42.6 L18 45.6Z" fill="#204a87"/></g><g stroke="#302b00" stroke-width="1.3" stroke-linejoin="round"><path d="M28 32 L36.5 27.75 L45.0 32 L36.5 36.25Z" fill="#fce94f"/><path d="M28 32 L36.5 36.25 L36.5 45.6 L28 41.35Z" fill="#edd400"/><path d="M36.5 36.25 L45.0 32 L45.0 41.35 L36.5 45.6Z" fill="#c4a000"/></g></svg>
<div class="a" style="left:694px;top:104px;width:2px;height:50px;background:#a0a0a0;"></div>
<div class="a" style="left:1746px;top:104px;width:2px;height:50px;background:#a0a0a0;"></div>
<div class="a" style="left:2318px;top:104px;width:2px;height:50px;background:#a0a0a0;"></div>
<div class="a" style="left:2632px;top:104px;width:2px;height:50px;background:#a0a0a0;"></div>
<svg class="a" style="left:1709px;top:142px" width="20" height="14" viewBox="0 0 20 14"><path d="M3 3 L10 9 L17 3" fill="none" stroke="#ddd" stroke-width="3"/></svg>
<svg class="a" style="left:2281px;top:142px" width="20" height="14" viewBox="0 0 20 14"><path d="M3 3 L10 9 L17 3" fill="none" stroke="#ddd" stroke-width="3"/></svg>
<div class="a" style="left:12px;top:170px;width:686px;height:36px;background:#2a2a2a;"></div>
<div class="t" style="left:246.00px;top:180.60px;font-size:23px;color:#c8c8c8;letter-spacing:0.456px;">Combo View</div>
<svg class="a" style="left:628px;top:179px" width="18" height="18" viewBox="0 0 18 18"><path d="M2 7V2H7 M11 2H16V7 M16 11V16H11 M7 16H2V11 M2 2L6 6 M16 2L12 6 M16 16L12 12 M2 16L6 12" fill="none" stroke="#aaa" stroke-width="1.3"/></svg>
<svg class="a" style="left:664px;top:179px" width="18" height="18" viewBox="0 0 18 18"><path d="M2 2L16 16M16 2L2 16" stroke="#ccc" stroke-width="2.2"/></svg>
<div class="a" style="left:18px;top:214px;width:178px;height:53px;background:#333333;"></div>
<div class="a" style="left:19px;top:214px;width:177px;height:8px;background:#557ab8;"></div>
<div class="a" style="left:196px;top:214px;width:188px;height:53px;background:#3c3c3c;"></div>
<div class="t" style="left:79.00px;top:232.80px;font-size:23px;color:#fff;letter-spacing:-1.250px;">Model</div>
<div class="t" style="left:264.00px;top:232.80px;font-size:23px;color:#a0a0a0;letter-spacing:-0.875px;">Tasks</div>
<div class="a" style="left:14px;top:282px;width:681px;height:64px;background:#2a2a2a;"></div>
<div class="a" style="left:330px;top:282px;width:2px;height:64px;background:#3a3a3a;"></div>
<div class="t" style="left:25.80px;top:306.20px;font-size:23px;color:#e8e8e8;letter-spacing:0.606px;">Labels &amp; Attributes</div>
<div class="t" style="left:343.40px;top:306.20px;font-size:23px;color:#e8e8e8;letter-spacing:0.620px;">Description</div>
<div class="a" style="left:14px;top:346px;width:681px;height:584px;background:#3c3c3c;"></div>
<div class="t" style="left:20.60px;top:355.00px;font-size:23px;color:#e8e8e8;letter-spacing:0.740px;">Application</div>
<div class="a" style="left:32px;top:382px;width:2px;height:14px;background:#6a6a6a;"></div>
<div class="a" style="left:42px;top:402px;width:12px;height:2px;background:#6a6a6a;"></div>
<div class="a" style="left:72px;top:422px;width:2px;height:296px;background:#6a6a6a;"></div>
<div class="a" style="left:82px;top:443px;width:12px;height:2px;background:#6a6a6a;"></div>
<div class="a" style="left:112px;top:462px;width:2px;height:180px;background:#6a6a6a;"></div>
<div class="a" style="left:118px;top:483px;width:16px;height:2px;background:#6a6a6a;"></div>
<div class="a" style="left:118px;top:523px;width:16px;height:2px;background:#6a6a6a;"></div>
<div class="a" style="left:118px;top:563px;width:16px;height:2px;background:#6a6a6a;"></div>
<div class="a" style="left:118px;top:603px;width:16px;height:2px;background:#6a6a6a;"></div>
<div class="a" style="left:118px;top:643px;width:16px;height:2px;background:#6a6a6a;"></div>
<div class="a" style="left:72px;top:683px;width:22px;height:2px;background:#6a6a6a;"></div>
<div class="a" style="left:72px;top:700px;width:22px;height:24px;border-left:2px solid #6a6a6a;border-bottom:2px solid #6a6a6a;border-bottom-left-radius:6px"></div>
<div class="a" style="left:72px;top:420px;width:2px;height:282px;background:#6a6a6a;"></div>
<svg class="a" style="left:23px;top:394px" width="20" height="16" viewBox="0 0 20 16"><path d="M2.5 4.5 L10 11.5 L17.5 4.5" fill="none" stroke="#d8d8d8" stroke-width="4"/></svg>
<svg class="a" style="left:63px;top:435px" width="20" height="16" viewBox="0 0 20 16"><path d="M2.5 4.5 L10 11.5 L17.5 4.5" fill="none" stroke="#d8d8d8" stroke-width="4"/></svg>
<svg class="a" style="left:105px;top:473px" width="16" height="20" viewBox="0 0 16 20"><path d="M4.5 2.5 L11.5 10 L4.5 17.5" fill="none" stroke="#d8d8d8" stroke-width="4"/></svg>
<svg class="a" style="left:105px;top:513px" width="16" height="20" viewBox="0 0 16 20"><path d="M4.5 2.5 L11.5 10 L4.5 17.5" fill="none" stroke="#d8d8d8" stroke-width="4"/></svg>
<svg class="a" style="left:105px;top:553px" width="16" height="20" viewBox="0 0 16 20"><path d="M4.5 2.5 L11.5 10 L4.5 17.5" fill="none" stroke="#d8d8d8" stroke-width="4"/></svg>
<svg class="a" style="left:105px;top:593px" width="16" height="20" viewBox="0 0 16 20"><path d="M4.5 2.5 L11.5 10 L4.5 17.5" fill="none" stroke="#d8d8d8" stroke-width="4"/></svg>
<svg class="a" style="left:105px;top:633px" width="16" height="20" viewBox="0 0 16 20"><path d="M4.5 2.5 L11.5 10 L4.5 17.5" fill="none" stroke="#d8d8d8" stroke-width="4"/></svg>
<div class="t" style="left:104.00px;top:394.00px;font-size:23px;color:#ececec;letter-spacing:0.257px;font-weight:bold">CalibrationCube</div>
<svg class="a" style="left:63px;top:387px" width="26" height="30" viewBox="0 0 26 30"><rect x="1" y="1" width="24" height="28" fill="#ececec" stroke="#fafafa" stroke-width="1.5"/>
<circle cx="17.5" cy="10" r="6" fill="#d31212" stroke="#400" stroke-width="0.8"/>
<g stroke="#0b1521" stroke-width="1"><path d="M4 11 L12 7 L19 11 L19 22 L11 26 L4 22Z" fill="#3465a4"/><path d="M4 11 L12 7 L19 11 L11 15Z" fill="#7aa6d9"/><path d="M4 11 L11 15 L11 26 L4 22Z" fill="#5e8fcd"/></g></svg>
<div class="t" style="left:145.00px;top:433.60px;font-size:23px;color:#ececec;letter-spacing:0.171px;font-weight:bold">CalibrationCube</div>
<svg class="a" style="left:103px;top:427px" width="26" height="30" viewBox="5.6 2.4 37 43"><defs><linearGradient id="bdg" x1="0" y1="0" x2="0.3" y2="1"><stop offset="0" stop-color="#7fa9dd"/><stop offset="1" stop-color="#3465a4"/></linearGradient>
<linearGradient id="bdk" x1="0" y1="0" x2="1" y2="1"><stop offset="0" stop-color="#4a7fc5"/><stop offset="1" stop-color="#204a87"/></linearGradient></defs>
<g stroke="#0b1521" stroke-width="1.6" stroke-linejoin="round">
<path d="M21.8 3.4 L31.1 7.5 L17.1 19.1 L6.8 15.6Z" fill="#729fcf"/>
<path d="M31.1 7.5 L31.1 17.7 L17.3 29.9 L17.1 19.1Z" fill="url(#bdk)"/>
<path d="M31.1 17.7 L41 20.8 L27.4 33.2 L17.3 29.9Z" fill="#729fcf"/>
<path d="M41 20.8 L41.4 30.8 L27.4 44 L27.4 33.2Z" fill="url(#bdk)"/>
<path d="M6.8 15.6 L17.1 19.1 L17.3 29.9 L27.4 33.2 L27.4 44 L6.6 36.6Z" fill="url(#bdg)"/>
</g></svg>
<div class="t" style="left:184.00px;top:474.20px;font-size:23px;color:#ececec;letter-spacing:0.980px;">Origin</div>
<svg class="a" style="left:140px;top:466px" width="32" height="32" viewBox="0 0 32 32"><path d="M14 2 V18 H30 M14 18 L4 28" fill="none" stroke="#8a8a8a" stroke-width="2.6"/><circle cx="14" cy="18" r="2" fill="#777"/></svg>
<div class="t" style="left:184.00px;top:513.40px;font-size:23px;color:#ececec;letter-spacing:-0.714px;">Pad_Cube</div>
<svg class="a" style="left:141px;top:506px" width="32" height="32" viewBox="0 0 32 32"><path d="M2 24 L16 18 L30 23 L16 30Z" fill="none" stroke="#aaa" stroke-width="1.6"/>
<g stroke="#666" stroke-width="1"><path d="M2 8 L16 3 L30 7 L30 15 L16 22 L2 16Z" fill="#999"/><path d="M2 8 L16 3 L30 7 L16 12Z" fill="#c8c8c8"/><path d="M2 8 L16 12 L16 22 L2 16Z" fill="#b0b0b0"/></g></svg>
<div class="t" style="left:184.20px;top:554.00px;font-size:23px;color:#ececec;letter-spacing:-0.700px;">Pocket_X</div>
<svg class="a" style="left:141px;top:546px" width="32" height="32" viewBox="0 0 32 32"><defs><linearGradient id="tpg" x1="0" y1="0" x2="0" y2="1"><stop offset="0" stop-color="#cfcfcf"/><stop offset="1" stop-color="#a8a8a8"/></linearGradient></defs>
<g stroke="#6a6a6a" stroke-width="1" stroke-linejoin="round"><path d="M0.7 17 L14.7 4.8 L29.4 10 L14.7 21.4Z" fill="#cdcdcd"/><path d="M0.7 17 L14.7 21.4 L14.7 29 L0.7 24.6Z" fill="url(#tpg)"/><path d="M14.7 21.4 L29.4 10 L29.4 20 L14.7 29Z" fill="#a9a9a9"/></g>
<path d="M7 13.1 L16.6 8 L22.3 10.6 L12.8 15.7Z" fill="#9a9a9a" stroke="#6a6a6a" stroke-width="0.9"/><path d="M16.6 8 L22.3 10.6 L14.5 13Z" fill="#b8b8b8"/></svg>
<div class="t" style="left:184.20px;top:594.00px;font-size:23px;color:#ececec;letter-spacing:-0.743px;">Pocket_Y</div>
<svg class="a" style="left:141px;top:586px" width="32" height="32" viewBox="0 0 32 32"><defs><linearGradient id="tpg" x1="0" y1="0" x2="0" y2="1"><stop offset="0" stop-color="#cfcfcf"/><stop offset="1" stop-color="#a8a8a8"/></linearGradient></defs>
<g stroke="#6a6a6a" stroke-width="1" stroke-linejoin="round"><path d="M0.7 17 L14.7 4.8 L29.4 10 L14.7 21.4Z" fill="#cdcdcd"/><path d="M0.7 17 L14.7 21.4 L14.7 29 L0.7 24.6Z" fill="url(#tpg)"/><path d="M14.7 21.4 L29.4 10 L29.4 20 L14.7 29Z" fill="#a9a9a9"/></g>
<path d="M7 13.1 L16.6 8 L22.3 10.6 L12.8 15.7Z" fill="#9a9a9a" stroke="#6a6a6a" stroke-width="0.9"/><path d="M16.6 8 L22.3 10.6 L14.5 13Z" fill="#b8b8b8"/></svg>
<div class="t" style="left:184.20px;top:633.80px;font-size:23px;color:#ececec;letter-spacing:-0.443px;">Pocket_Z</div>
<svg class="a" style="left:141px;top:626px" width="32" height="32" viewBox="0 0 32 32"><g stroke="#0b1521" stroke-width="1" stroke-linejoin="round"><path d="M0.7 17 L14.7 4.8 L29.4 10 L14.7 21.4Z" fill="#7aa6d9"/><path d="M0.7 17 L14.7 21.4 L14.7 29 L0.7 24.6Z" fill="#6d9fd8"/><path d="M14.7 21.4 L29.4 10 L29.4 20 L14.7 29Z" fill="#3465a4"/></g>
<path d="M7 13.1 L16.6 8 L22.3 10.6 L12.8 15.7Z" fill="#c00" stroke="#300" stroke-width="0.9"/><path d="M16.6 8 L22.3 10.6 L14.5 13Z" fill="#ef2929"/>
<path d="M17.5 14 h6 v4 h3.5 v7 h-3 v3 h-2 v3 h-4 v-3 h-2 v-3 h-3 v-7 h4.5z" fill="#12c012"/><path d="M19 16 h3 v4.5 h3 v3.5 h-2.5 v3 h-1.5 v2.5 h-1.5 v-2.5 h-1.5 v-3 h-2.5 v-3.5 h3.5z" fill="#fff"/></svg>
<div class="t" style="left:143.80px;top:674.20px;font-size:23px;color:#ececec;letter-spacing:0.090px;">Spreadsheet</div>
<svg class="a" style="left:100px;top:670px" width="32" height="26" viewBox="0 0 32 26"><rect x="0" y="0" width="32" height="25.5" fill="#000"/><rect x="1.9" y="1.9" width="7.9" height="3.8" fill="#fff"/><rect x="11.9" y="1.9" width="7.9" height="3.8" fill="#fff"/><rect x="21.7" y="1.9" width="8.3" height="3.8" fill="#fff"/><rect x="1.9" y="7.9" width="7.9" height="3.8" fill="#fff"/><rect x="11.9" y="7.9" width="7.9" height="3.8" fill="#fff"/><rect x="21.7" y="7.9" width="8.3" height="3.8" fill="#fff"/><rect x="1.9" y="13.8" width="7.9" height="3.8" fill="#fff"/><rect x="11.9" y="13.8" width="7.9" height="3.8" fill="#fff"/><rect x="21.7" y="13.8" width="8.3" height="3.8" fill="#fff"/><rect x="1.9" y="19.8" width="7.9" height="3.8" fill="#fff"/><rect x="11.9" y="19.8" width="7.9" height="3.8" fill="#fff"/><rect x="21.7" y="19.8" width="8.3" height="3.8" fill="#fff"/></svg>
<div class="t" style="left:144.00px;top:713.40px;font-size:23px;color:#ececec;letter-spacing:-0.010px;">Cube_Meshed</div>
<svg class="a" style="left:102px;top:708px" width="30" height="30" viewBox="0 0 32 32"><path d="M2 23.3 L4.6 3.6 L9 1 L18.6 4.2 L19.2 13.1 L21.8 1 L26.3 13.1 L28.2 23.3 L20.5 25.2 L13.5 22 L8.4 24Z" fill="#c4c4c4" stroke="#8a8a8a" stroke-width="0.9" stroke-linejoin="round"/>
<path d="M9 1 L8.4 24 M13.5 3 L13.5 22 M18.6 4.2 L20.5 25.2 M21.8 1 L20.5 25.2" stroke="#8e8e8e" stroke-width="0.8" fill="none"/></svg>
<div class="a" style="left:316px;top:952px;width:12px;height:4px;background:#d0d0d0;"></div>
<div class="a" style="left:332px;top:952px;width:12px;height:4px;background:#d0d0d0;"></div>
<div class="a" style="left:348px;top:952px;width:12px;height:4px;background:#d0d0d0;"></div>
<div class="a" style="left:364px;top:952px;width:12px;height:4px;background:#d0d0d0;"></div>
<div class="a" style="left:380px;top:952px;width:12px;height:4px;background:#d0d0d0;"></div>
<div class="a" style="left:718px;top:920px;width:4px;height:11px;background:#d0d0d0;"></div>
<div class="a" style="left:718px;top:936px;width:4px;height:11px;background:#d0d0d0;"></div>
<div class="a" style="left:718px;top:952px;width:4px;height:11px;background:#d0d0d0;"></div>
<div class="a" style="left:718px;top:968px;width:4px;height:11px;background:#d0d0d0;"></div>
<div class="a" style="left:718px;top:984px;width:4px;height:11px;background:#d0d0d0;"></div>
<div class="a" style="left:14px;top:978px;width:681px;height:64px;background:#2a2a2a;"></div>
<div class="a" style="left:212px;top:978px;width:2px;height:64px;background:#3a3a3a;"></div>
<div class="t" style="left:25.80px;top:1000.80px;font-size:23px;color:#e8e8e8;letter-spacing:0.443px;">Property</div>
<div class="t" style="left:226.00px;top:1001.80px;font-size:23px;color:#e8e8e8;letter-spacing:-0.050px;">Value</div>
<div class="a" style="left:14px;top:1042px;width:681px;height:636px;background:#3c3c3c;"></div>
<div class="a" style="left:0px;top:1691px;width:710px;height:1px;background:#30323a;"></div>
<div class="a" style="left:16px;top:1692px;width:185px;height:54px;background:#3c3c3c;"></div>
<div class="a" style="left:201px;top:1738px;width:181px;height:8px;background:#557ab8;"></div>
<div class="t" style="left:85.00px;top:1710.80px;font-size:23px;color:#a0a0a0;letter-spacing:-1.400px;">View</div>
<div class="t" style="left:269.00px;top:1709.80px;font-size:23px;color:#fff;letter-spacing:-1.333px;">Data</div>
<div class="t" style="left:16.00px;top:1777.00px;font-size:23px;color:#fff;letter-spacing:-0.364px;">Valid, Internal name: Body</div>
<div class="a" style="left:2292px;top:1758px;width:188px;height:56px;background:#557ab8;"></div>
<svg class="a" style="left:0;top:0" width="2736" height="1824"><path d="M2316 1782 C2316 1776,2318.5 1774.3,2324 1774.3 C2329.5 1774.3,2332 1776,2332 1782 V1789 C2332 1795.5,2328.5 1798.7,2324 1798.7 C2319.5 1798.7,2316 1795.5,2316 1789Z" fill="none" stroke="#2c302e" stroke-width="3"/><rect x="2322.7" y="1778" width="2.6" height="5.8" fill="#2c302e"/></svg>
<div class="t" style="left:2348.00px;top:1777.80px;font-size:23px;color:#e8e8e8;letter-spacing:-1.188px;">TinkerCAD</div>
<div class="t" style="left:2506.00px;top:1776.80px;font-size:23px;color:#fff;letter-spacing:-0.444px;">59.46 mm x 44.93 mm</div>
<div class="a" style="left:729px;top:169px;width:2007px;height:1517px;background:#2c2c2c"></div>
<div class="a" style="left:730px;top:170px;width:2006px;height:1516px;background:linear-gradient(#7a7a7a,#575757)"></div>
<svg class="a" style="left:0;top:0" width="2736" height="1824"><polygon points="1704.5,412.7 2182.0,689.0 2182.0,1238.5 1704.0,1513.5 1227.0,1238.5 1227.0,689.0" fill="#808080"/><polygon points="1716.7,533.6 1768.4,786.8 1768.4,815.0 1716.7,561.1" fill="#1c1c1c"/><polygon points="1293.6,798.1 1333.1,821.0 1456.3,1118.7 1433.0,1131.7" fill="#adadad"/><polygon points="1564.3,954.9 1573.5,960.4 1492.2,1068.8 1465.5,1081.7" fill="#2c2c2c"/><polygon points="2069.4,824.9 2111.4,800.4 1981.6,1078.0 1957.1,1065.7" fill="#adadad"/><polygon points="1918.4,1147.3 1942.9,1161.6 1850.0,1358.2 1826.6,1344.8" fill="#adadad"/><polygon points="1844.9,954.7 1851.0,951.4 1943.7,1042.4 1920.4,1029.4" fill="#1c1c1c"/><polygon points="1957.1,1065.7 1981.6,1078.0 2111.7,1208.0 2086.8,1195.3" fill="#1c1c1c"/><polygon points="1389.7,666.2 1667.8,506.0 1716.7,533.6 1768.4,786.8 1964.7,674.5 2023.6,708.0 1738.4,871.6 1690.0,843.5 1639.7,589.7 1448.4,699.9" fill="none" stroke="#141414" stroke-width="2.0" stroke-linejoin="miter"/><polygon points="1293.6,798.1 1369.4,842.1 1465.5,1081.7 1564.3,954.9 1637.5,996.7 1498.6,1169.8 1498.6,1323.5 1433.0,1285.6 1433.0,1131.7" fill="none" stroke="#141414" stroke-width="2.0" stroke-linejoin="miter"/><polygon points="2111.4,800.4 1981.6,1078.0 2111.7,1208.0 2035.8,1251.5 1942.9,1161.6 1850.0,1358.2 1773.6,1403.0 1904.1,1124.1 1773.5,995.1 1851.0,951.4 1943.7,1042.4 2036.7,843.3" fill="none" stroke="#141414" stroke-width="2.0" stroke-linejoin="miter"/><polyline points="1414.9,679.7 1667.8,533.6 1716.7,561.1" fill="none" stroke="#141414" stroke-width="2.0" stroke-linejoin="miter"/><polyline points="1667.8,506.0 1667.8,533.6" fill="none" stroke="#141414" stroke-width="2.0" stroke-linejoin="miter"/><polyline points="1716.7,533.6 1716.7,561.1" fill="none" stroke="#141414" stroke-width="2.0" stroke-linejoin="miter"/><polyline points="1768.4,786.8 1768.4,815.0" fill="none" stroke="#141414" stroke-width="2.0" stroke-linejoin="miter"/><polyline points="1768.4,815.0 1964.7,702.2 1998.7,722.1" fill="none" stroke="#141414" stroke-width="2.0" stroke-linejoin="miter"/><polyline points="1964.7,674.5 1964.7,702.2" fill="none" stroke="#141414" stroke-width="2.0" stroke-linejoin="miter"/><polyline points="1333.1,821.0 1456.3,1118.7 1456.5,1272.0 1498.6,1296.2" fill="none" stroke="#141414" stroke-width="2.0" stroke-linejoin="miter"/><polyline points="1433.0,1131.7 1456.3,1118.7" fill="none" stroke="#141414" stroke-width="2.0" stroke-linejoin="miter"/><polyline points="1433.0,1285.6 1456.5,1272.0" fill="none" stroke="#141414" stroke-width="2.0" stroke-linejoin="miter"/><polyline points="2018.3,1234.2 2086.8,1195.3" fill="none" stroke="#141414" stroke-width="2.0" stroke-linejoin="miter"/><polyline points="1826.6,1344.8 1792.8,1364.3" fill="none" stroke="#141414" stroke-width="2.0" stroke-linejoin="miter"/><polyline points="1704.0,963.0 1704.0,1513.5" fill="none" stroke="#141414" stroke-width="2.0" stroke-linejoin="miter"/><polyline points="1227.0,689.0 1704.0,963.0 2182.0,689.0" fill="none" stroke="#141414" stroke-width="2.0" stroke-linejoin="miter"/><polygon points="1704.5,412.7 2182.0,689.0 2182.0,1238.5 1704.0,1513.5 1227.0,1238.5 1227.0,689.0" fill="none" stroke="#141414" stroke-width="2.0" stroke-linejoin="miter"/></svg>
<svg class="a" style="left:0;top:0" width="2736" height="1824"><path d="M2652 189 L2663 177 L2674 189Z" fill="#a9abae"/><path d="M2652 297 L2663 309 L2674 297Z" fill="#a9abae"/><path d="M2609 232 L2597 243 L2609 254Z" fill="#a9abae"/><path d="M2717 232 L2729 243 L2717 254Z" fill="#a9abae"/><circle cx="2723" cy="183" r="6" fill="#a9abae"/><path d="M2643 187 A48 48 0 0 0 2617 207" fill="none" stroke="#a9abae" stroke-width="5"/><path d="M2614 197 L2614 212 L2627 208Z" fill="#a9abae"/><path d="M2683 187 A48 48 0 0 1 2709 207" fill="none" stroke="#a9abae" stroke-width="5"/><path d="M2712 197 L2712 212 L2699 208Z" fill="#a9abae"/><polygon points="2663.0,207.0 2696.0,219.0 2700.0,228.0 2697.0,262.0 2669.0,283.0 2657.0,283.0 2631.0,262.0 2626.0,228.0 2630.0,219.0" fill="#cacdd1" stroke="#222" stroke-width="1"/><polyline points="2631,219 2663,234 2696,219" fill="none" stroke="#222" stroke-width="1"/><polyline points="2626,228 2657,246 2669,246 2700,228" fill="none" stroke="#222" stroke-width="1"/><polyline points="2657,246 2660,236 2666,236 2669,246 M2657,246 L2657,283" fill="none" stroke="#222" stroke-width="1"/><path d="M2657 246 V283 M2669 246 V283" stroke="#222" stroke-width="1"/><g transform="translate(2633.5 251.5) rotate(45) scale(0.6 0.95)"><text x="0" y="0" font-size="10" font-weight="bold" fill="#000" stroke="#000" stroke-width="0.9" font-family="Liberation Sans">FRONT</text></g><g transform="translate(2680.5 263.5) rotate(-45) scale(0.58 0.95)"><text x="0" y="0" font-size="10" font-weight="bold" fill="#000" stroke="#000" stroke-width="0.9" font-family="Liberation Sans">RIGHT</text></g><g transform="translate(2657 220) rotate(16) scale(0.95 0.65)"><text x="0" y="0" font-size="8" font-weight="bold" fill="#000" stroke="#000" stroke-width="0.7" font-family="Liberation Sans">TOP</text></g><path d="M2619 231 L2626 264" stroke="#00f" stroke-width="1.5"/><path d="M2626 264 L2650 248" stroke="#6f6" stroke-width="1.2"/><path d="M2626 264 L2650 286" stroke="#f00" stroke-width="1.8"/><path d="M2687 286 L2696 282 L2706 286 L2706 300 L2696 304 L2687 300Z" fill="#8e9093"/><path d="M2687 286 L2696 282 L2706 286 L2697 290Z" fill="#a4a6a8"/><path d="M2697 290 L2706 286 L2706 300 L2697 304Z" fill="#84868a"/><path d="M2711 291 L2721 291 L2716 297Z" fill="#5e5e5e"/></svg>
<svg class="a" style="left:0;top:0" width="2736" height="1824"><path d="M2660.7 1610 V1580" stroke="#22228a" stroke-width="3"/><path d="M2655.5 1581 L2660.7 1560 L2666 1581Z" fill="#22228a"/><path d="M2661 1610 L2681 1600" stroke="#1e8a1e" stroke-width="3"/><path d="M2678 1595 L2691.5 1592 L2683 1603Z" fill="#1e8a1e"/><path d="M2661 1611 L2688 1626" stroke="#862020" stroke-width="3.5"/><path d="M2688.7 1620.5 L2704.2 1635 L2683.5 1630.2Z" fill="#862020"/><text x="2661" y="1558" font-size="8" fill="#000" font-family="Liberation Sans">Z</text><text x="2693" y="1590" font-size="8" fill="#000" font-family="Liberation Sans">Y</text><text x="2705" y="1634" font-size="8" fill="#000" font-family="Liberation Sans">X</text></svg>
<div class="a" style="left:0px;top:1822px;width:2736px;height:2px;background:#3d3d3d;"></div>
<svg class="a" style="left:2712px;top:121px" width="20" height="14" viewBox="0 0 20 14"><path d="M3 1 L8 7 L3 13 M11 1 L16 7 L11 13" fill="none" stroke="#3a3a3a" stroke-width="2.5"/></svg>
<div class="a" style="left:730px;top:1686px;width:931px;height:60px;background:#3c3c3c;"></div>
<div class="a" style="left:989px;top:1686px;width:351px;height:60px;background:#333333;"></div>
<div class="a" style="left:989px;top:1738px;width:351px;height:8px;background:#557ab8;"></div>
<svg class="a" style="left:756px;top:1698px" width="34" height="34" viewBox="0 0 34 34"><defs><linearGradient id="lgF" x1="0" y1="0" x2="1" y2="1"><stop offset="0" stop-color="#ff3030"/><stop offset="1" stop-color="#b00000"/></linearGradient></defs>
<path d="M1 1 H17.8 V7.6 H7.8 V12.7 H13 V17.4 H7.8 V30.8 H1 Z" fill="url(#lgF)" stroke="#2a0000" stroke-width="1.3"/>
<path d="M28.33 18.61 L30.95 18.68 L30.95 20.72 L28.33 20.79 L26.72 24.67 L28.52 26.58 L27.08 28.02 L25.17 26.22 L21.29 27.83 L21.22 30.45 L19.18 30.45 L19.11 27.83 L15.23 26.22 L13.32 28.02 L11.88 26.58 L13.68 24.67 L12.07 20.79 L9.45 20.72 L9.45 18.68 L12.07 18.61 L13.68 14.73 L11.88 12.82 L13.32 11.38 L15.23 13.18 L19.11 11.57 L19.18 8.95 L21.22 8.95 L21.29 11.57 L25.17 13.18 L27.08 11.38 L28.52 12.82 L26.72 14.73Z" fill="#5b8fd6" stroke="#0b1a3a" stroke-width="1"/><circle cx="20.2" cy="19.7" r="3.7" fill="#f4f4f4" stroke="#0b1a3a" stroke-width="1"/></svg>
<svg class="a" style="left:1014px;top:1698px" width="34" height="34" viewBox="0 0 34 34"><defs><linearGradient id="lgF" x1="0" y1="0" x2="1" y2="1"><stop offset="0" stop-color="#ff3030"/><stop offset="1" stop-color="#b00000"/></linearGradient></defs>
<path d="M1 1 H17.8 V7.6 H7.8 V12.7 H13 V17.4 H7.8 V30.8 H1 Z" fill="url(#lgF)" stroke="#2a0000" stroke-width="1.3"/>
<path d="M28.33 18.61 L30.95 18.68 L30.95 20.72 L28.33 20.79 L26.72 24.67 L28.52 26.58 L27.08 28.02 L25.17 26.22 L21.29 27.83 L21.22 30.45 L19.18 30.45 L19.11 27.83 L15.23 26.22 L13.32 28.02 L11.88 26.58 L13.68 24.67 L12.07 20.79 L9.45 20.72 L9.45 18.68 L12.07 18.61 L13.68 14.73 L11.88 12.82 L13.32 11.38 L15.23 13.18 L19.11 11.57 L19.18 8.95 L21.22 8.95 L21.29 11.57 L25.17 13.18 L27.08 11.38 L28.52 12.82 L26.72 14.73Z" fill="#5b8fd6" stroke="#0b1a3a" stroke-width="1"/><circle cx="20.2" cy="19.7" r="3.7" fill="#f4f4f4" stroke="#0b1a3a" stroke-width="1"/></svg>
<svg class="a" style="left:1369px;top:1701px" width="30" height="26" viewBox="0 0 30 26"><rect x="0" y="0" width="30" height="5" fill="#fff"/><rect x="0" y="7" width="30" height="5" fill="#fff"/><rect x="0" y="14" width="30" height="5" fill="#fff"/><rect x="0" y="21" width="30" height="5" fill="#fff"/><rect x="6" y="0" width="1.5" height="5" fill="#3a3a3a"/><rect x="6" y="7" width="1.5" height="5" fill="#3a3a3a"/><rect x="6" y="14" width="1.5" height="5" fill="#3a3a3a"/><rect x="6" y="21" width="1.5" height="5" fill="#3a3a3a"/></svg>
<div class="t" style="left:808.00px;top:1706.00px;font-size:23px;color:#a8a8a8;letter-spacing:-0.578px;">Start page</div>
<div class="t" style="left:1066.00px;top:1707.80px;font-size:23px;color:#fff;letter-spacing:-0.526px;">CalibrationCube : 1*</div>
<div class="t" style="left:1419.00px;top:1707.00px;font-size:23px;color:#a8a8a8;letter-spacing:-0.667px;">CalibrationCube*</div>
<svg class="a" style="left:953px;top:1706px" width="20" height="20" viewBox="0 0 20 20"><path d="M2 2L18 18M18 2L2 18" stroke="#8a8a8a" stroke-width="3"/></svg>
<svg class="a" style="left:1306px;top:1706px" width="20" height="20" viewBox="0 0 20 20"><path d="M2 2L18 18M18 2L2 18" stroke="#8a8a8a" stroke-width="3"/></svg>
<svg class="a" style="left:1626px;top:1706px" width="20" height="20" viewBox="0 0 20 20"><path d="M2 2L18 18M18 2L2 18" stroke="#8a8a8a" stroke-width="3"/></svg>
</body></html>
